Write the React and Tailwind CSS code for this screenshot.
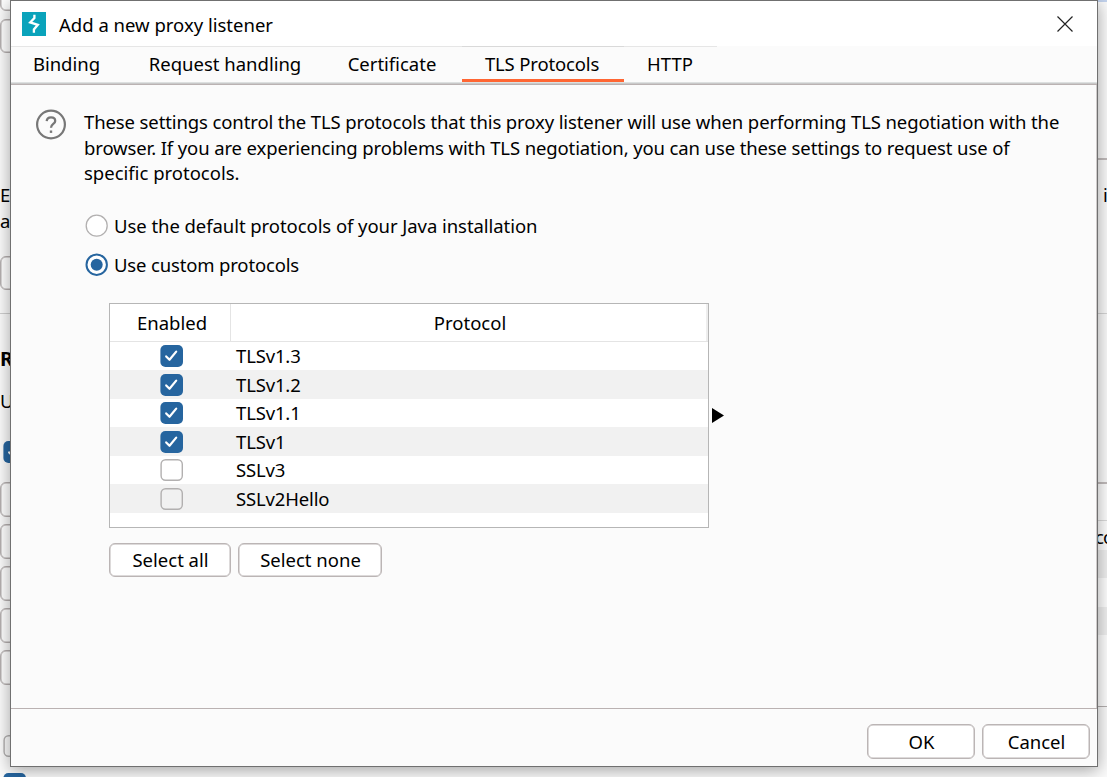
const protocols = [
  { name: "TLSv1.3", enabled: true, row: "h-[28px] bg-white" },
  { name: "TLSv1.2", enabled: true, row: "h-[29px] bg-[#f1f1f1] pt-px" },
  { name: "TLSv1.1", enabled: true, row: "h-[28px] bg-white" },
  { name: "TLSv1", enabled: true, row: "h-[29px] bg-[#f1f1f1] pt-px" },
  { name: "SSLv3", enabled: false, row: "h-[28px] bg-white" },
  { name: "SSLv2Hello", enabled: false, row: "h-[29px] bg-[#f1f1f1] pt-px" },
];

const tabs = [
  { label: "Binding", size: "w-[111px]" },
  { label: "Request handling", size: "w-[206px]" },
  { label: "Certificate", size: "w-[134px] pr-[6px]" },
  { label: "TLS Protocols", size: "w-[162px] pr-[2px] tracking-[-0.15px]", active: true },
  { label: "HTTP", size: "w-[93px] pr-px" },
];

function CheckBox({ checked, className = "" }) {
  return (
    <svg viewBox="0 0 23 22" className={`block h-[22px] w-[23px] shrink-0 ${className}`}>
      {checked ? (
        <>
          <rect x="0.4" y="0" width="22.6" height="22" rx="5" fill="#26659f" />
          <path d="M6.2 11.4 L9.5 14.8 L16.2 6.6" fill="none" stroke="#fff" strokeWidth="2.2" strokeLinecap="round" strokeLinejoin="round" />
        </>
      ) : (
        <rect x="1.1" y="0.7" width="21.2" height="20.6" rx="4.5" fill="none" stroke="#b2b0b0" strokeWidth="1.4" />
      )}
    </svg>
  );
}

function Radio({ checked }) {
  return (
    <svg viewBox="0 0 23 23" className="block h-[23px] w-[23px] shrink-0">
      {checked ? (
        <>
          <circle cx="11.7" cy="11.7" r="10.2" fill="#fff" stroke="#26659f" strokeWidth="2" />
          <circle cx="11.7" cy="11.7" r="6" fill="#26659f" />
        </>
      ) : (
        <circle cx="11.7" cy="11.7" r="10.5" fill="#fff" stroke="#b2b0b0" strokeWidth="1.3" />
      )}
    </svg>
  );
}

function Button({ children, className }) {
  return (
    <button className={`flex items-center justify-center whitespace-nowrap rounded-[6px] border border-[#bbb5b5] bg-white pl-px pt-[2px] leading-none shadow-[inset_0_0_0_0.5px_#bbb5b5] ${className}`}>
      {children}
    </button>
  );
}

const edge = "w-8 shrink-0 rounded-[6px] border border-[#b5b0b0] bg-white shadow-[inset_0_0_0_0.5px_#b5b0b0]";

function LeftBackground() {
  return (
    <div className="flex h-full w-[11px] flex-col overflow-hidden">
      <div className={`${edge} -mt-[24px] h-[35px]`} />
      <div className={`${edge} mt-[8px] h-[34px]`} />
      <div className="mt-[130px] h-[26px] shrink-0 leading-[24px]">E</div>
      <div className="h-[26px] shrink-0 leading-[24px]">a</div>
      <div className={`${edge} mt-[21px] h-[34px]`} />
      <div className="mt-[23px] h-px shrink-0 bg-[#cfcfcf]" />
      <div className="mt-[32px] h-[26px] shrink-0 text-[20px] font-bold leading-[26px]">R</div>
      <div className="mt-[16px] h-[26px] shrink-0 leading-[26px]">U</div>
      <CheckBox checked className="ml-[3px] mt-[27px]" />
      <div className={`${edge} mt-[19px] h-[35px]`} />
      <div className={`${edge} mt-[7px] h-[35px]`} />
      <div className={`${edge} mt-[7px] h-[35px]`} />
      <div className={`${edge} mt-[7px] h-[35px]`} />
      <div className={`${edge} mt-[7px] h-[35px]`} />
      <CheckBox className="ml-[3px] mt-[50px]" />
    </div>
  );
}

function RightBackground() {
  return (
    <div className="flex h-full w-[12px] flex-col overflow-hidden">
      <div className="h-[2px] shrink-0 bg-[#c3d3ee]" />
      <div className="mt-[156px] h-[2px] shrink-0 bg-[#c2bcbc]" />
      <div className="mt-[23px] h-[26px] shrink-0 pl-[8px] leading-[24px]">i</div>
      <div className="mt-[104px] h-px shrink-0 bg-[#d6d6d6]" />
      <div className="mt-[168px] h-[2px] shrink-0 bg-[#c2bcbc]" />
      <div className="h-[36px] shrink-0 bg-white" />
      <div className="h-px shrink-0 bg-[#dcdcdc]" />
      <div className="h-[29px] shrink-0 bg-white leading-[31px] tracking-[-0.8px]">co</div>
      <div className="h-[28px] shrink-0 bg-[#f0f0f0]" />
      <div className="h-[29px] shrink-0 bg-white" />
      <div className="h-[28px] shrink-0 bg-[#f0f0f0]" />
      <div className="h-[71px] shrink-0 bg-white" />
      <div className="h-px shrink-0 bg-[#b5b0b0]" />
    </div>
  );
}

export default function App() {
  return (
    <div className="relative h-[777px] w-[1107px] overflow-hidden bg-[#fbfbfb] font-['Noto_Sans',sans-serif] text-[18.5px] text-black">
      <div className="flex h-full justify-between">
        <LeftBackground />
        <RightBackground />
      </div>
      <CheckBox checked className="absolute left-[3px] top-[773px]" />

      <div className="absolute left-[10px] top-0 flex h-[767px] w-[1088px] flex-col border border-[#707070] bg-[#fbfbfb] shadow-[0_3px_16px_rgba(0,0,0,0.36)]">
        <header className="flex h-[45px] shrink-0 items-center bg-white pl-[11px] pr-[24.5px]">
          <svg viewBox="0 0 24 24" className="h-[24px] w-[24px]">
            <rect width="24" height="24" fill="#0aa3bb" />
            <path d="M12.4 2.8 V6 L8.2 10.4 L15.8 12.8 L11.9 17.4 V20.8" fill="none" stroke="#fff" strokeWidth="2.3" />
          </svg>
          <h1 className="ml-[13px] flex-1 whitespace-nowrap pt-[3px] leading-6">Add a new proxy listener</h1>
          <svg viewBox="0 0 16 16" className="h-[16px] w-[16px]">
            <path d="M0.5 0.5 L15.5 15.5 M15.5 0.5 L0.5 15.5" stroke="#222" strokeWidth="1.2" />
          </svg>
        </header>

        <nav className="flex h-[36px] shrink-0">
          {tabs.map((tab) => (
            <div
              key={tab.label}
              className={`flex items-center justify-center whitespace-nowrap border-t leading-none ${tab.size} ${tab.active ? "border-b-[3px] border-b-[#ff6633] border-t-[#d9d9d9] pt-[3px]" : "border-t-[#e6e6e6]"}`}
            >
              {tab.label}
            </div>
          ))}
        </nav>
        <div className="h-px shrink-0 bg-[#dde0e0]" />
        <div className="h-[2px] shrink-0 border-t border-[#c9c9c9] bg-[#bab2b2]" />

        <main className="flex flex-1 border-r border-[#cfcbcb] pl-[25px] pt-[24px]">
          <svg viewBox="0 0 30 31" className="h-[31px] w-[30px] shrink-0">
            <circle cx="15" cy="15.5" r="13.9" fill="none" stroke="#777" strokeWidth="2.2" />
            <path d="M10.7 12.1 C10.9 9.5 12.6 8.4 15 8.4 C17.5 8.4 19.2 9.8 19.2 11.9 C19.2 15 15 14.9 15 18.7" fill="none" stroke="#777" strokeWidth="2.3" />
            <rect x="13.8" y="21.5" width="2.4" height="2.4" fill="#777" />
          </svg>
          <div className="ml-[18px]">
            <p className="whitespace-nowrap leading-[25.5px]">
              <span className="tracking-[-0.11px]">These settings control the TLS protocols that this proxy listener will use when performing TLS negotiation with the</span>
              <br />
              <span className="tracking-[-0.12px]">browser. If you are experiencing problems with TLS negotiation, you can use these settings to request use of</span>
              <br />
              <span>specific protocols.</span>
            </p>
            <label className="mt-[28px] flex h-[23px] items-center whitespace-nowrap pl-px leading-none">
              <Radio />
              <span className="ml-[6px] pt-[2px] tracking-[-0.06px]">Use the default protocols of your Java installation</span>
            </label>
            <label className="mt-[16px] flex h-[23px] items-center whitespace-nowrap pl-px leading-none">
              <Radio checked />
              <span className="ml-[6px] pt-[2px] tracking-[-0.16px]">Use custom protocols</span>
            </label>

            <div className="mt-[27px] flex items-center pl-[25px]">
              <div className="flex h-[225px] w-[600px] flex-col border border-[#b6b6b6] bg-white leading-none">
                <div className="flex h-[38px] shrink-0 border-b border-[#e4e4e4]">
                  <div className="flex w-[121px] items-center justify-center border-r border-[#e4e4e4] pl-[4px] pt-[2px]">Enabled</div>
                  <div className="flex flex-1 items-center justify-center border-r-2 border-[#eeeeee] pl-[3px] pt-[2px]">Protocol</div>
                </div>
                {protocols.map((p) => (
                  <div key={p.name} className={`flex shrink-0 items-center ${p.row}`}>
                    <div className="flex w-[121px] justify-center pl-px">
                      <CheckBox checked={p.enabled} />
                    </div>
                    <div className="pl-[5px] pt-px tracking-[-0.15px]">{p.name}</div>
                  </div>
                ))}
              </div>
              <svg viewBox="0 0 12 15" className="ml-[3px] h-[15px] w-[12px]">
                <path d="M0 0 L12 7.5 L0 15 Z" fill="#000" />
              </svg>
            </div>

            <div className="mt-[15px] flex gap-[7px] pl-[25px]">
              <Button className="h-[34px] w-[122px]">Select all</Button>
              <Button className="h-[34px] w-[144px]">Select none</Button>
            </div>
          </div>
        </main>

        <footer className="flex h-[58px] shrink-0 justify-end gap-[7px] border-t border-[#bab2b2] pr-[7px] pt-[15px]">
          <Button className="h-[35px] w-[108px]">OK</Button>
          <Button className="h-[35px] w-[108px]">Cancel</Button>
        </footer>
      </div>
    </div>
  );
}
